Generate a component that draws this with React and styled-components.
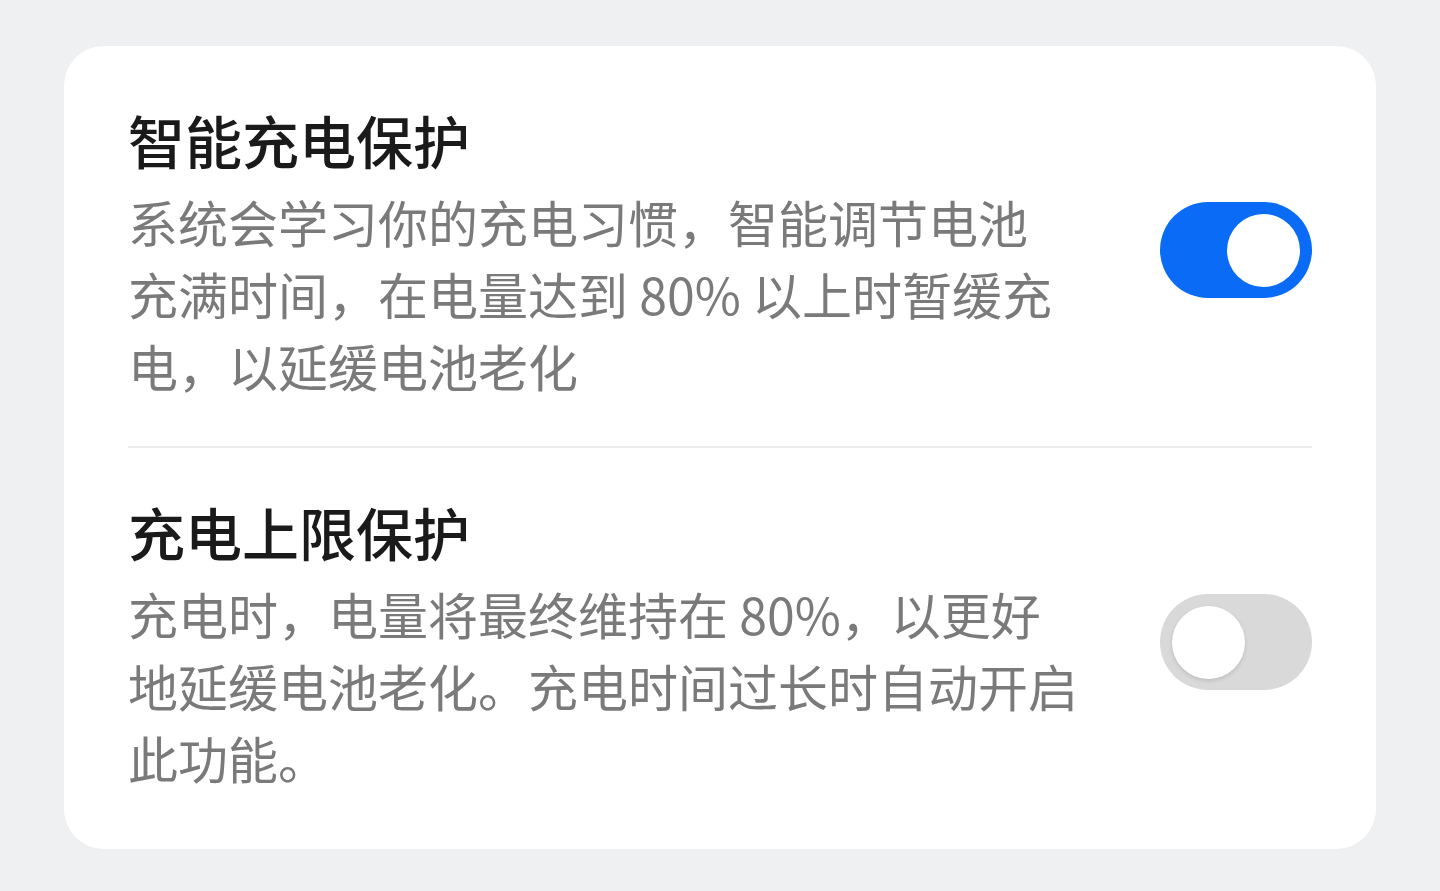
import React, { useState } from "react";
import styled, { createGlobalStyle } from "styled-components";

const GlobalStyle = createGlobalStyle`
  html, body {
    margin: 0;
    padding: 0;
    background: #eff0f2;
  }
  body {
    font-family: "Noto Sans CJK SC", "Noto Sans", sans-serif;
  }
`;

const Page = styled.div`
  min-height: 100vh;
  padding: 46px 64px 0;
  box-sizing: border-box;
`;

const Card = styled.section`
  background: #ffffff;
  border-radius: 40px;
  padding: 10px 64px 11px 64px;
`;

const Row = styled.div`
  display: flex;
  align-items: center;
  justify-content: space-between;
  gap: 40px;
  padding: 43px 0 45px;
  & + & {
    border-top: 2px solid #ececec;
  }
`;

const TextBlock = styled.div`
  display: flex;
  flex-direction: column;
`;

const Title = styled.h3`
  margin: 0 0 6px;
  font-size: 57px;
  line-height: 80px;
  font-weight: 500;
  color: #1a1a1a;
`;

const Desc = styled.p`
  margin: 0;
  font-size: 50px;
  line-height: 72px;
  font-weight: 400;
  color: #7a7a7a;
`;

const Track = styled.button`
  flex: none;
  width: 152px;
  height: 96px;
  border: none;
  border-radius: 48px;
  padding: 0 12px;
  display: flex;
  align-items: center;
  justify-content: ${(p) => (p.$on ? "flex-end" : "flex-start")};
  background: ${(p) => (p.$on ? "#0a6cf6" : "#d9d9d9")};
  cursor: pointer;
`;

const Knob = styled.span`
  width: 73px;
  height: 73px;
  border-radius: 50%;
  background: #ffffff;
  box-shadow: ${(p) => (p.$on ? "none" : "0 2px 4px rgba(0, 0, 0, 0.12)")};
`;

const Toggle = ({ initial }) => {
  const [on, setOn] = useState(initial);
  return (
    <Track $on={on} onClick={() => setOn(!on)} aria-pressed={on}>
      <Knob $on={on} />
    </Track>
  );
};

const items = [
  {
    title: "智能充电保护",
    lines: [
      "系统会学习你的充电习惯，智能调节电池",
      "充满时间，在电量达到 80% 以上时暂缓充",
      "电，以延缓电池老化",
    ],
    on: true,
  },
  {
    title: "充电上限保护",
    lines: [
      "充电时，电量将最终维持在 80%，以更好",
      "地延缓电池老化。充电时间过长时自动开启",
      "此功能。",
    ],
    on: false,
  },
];

export default function App() {
  return (
    <Page>
      <GlobalStyle />
      <Card>
        {items.map((item) => (
          <Row key={item.title}>
            <TextBlock>
              <Title>{item.title}</Title>
              <Desc>
                {item.lines.map((line, i) => (
                  <React.Fragment key={i}>
                    {line}
                    {i < item.lines.length - 1 && <br />}
                  </React.Fragment>
                ))}
              </Desc>
            </TextBlock>
            <Toggle initial={item.on} />
          </Row>
        ))}
      </Card>
    </Page>
  );
}
